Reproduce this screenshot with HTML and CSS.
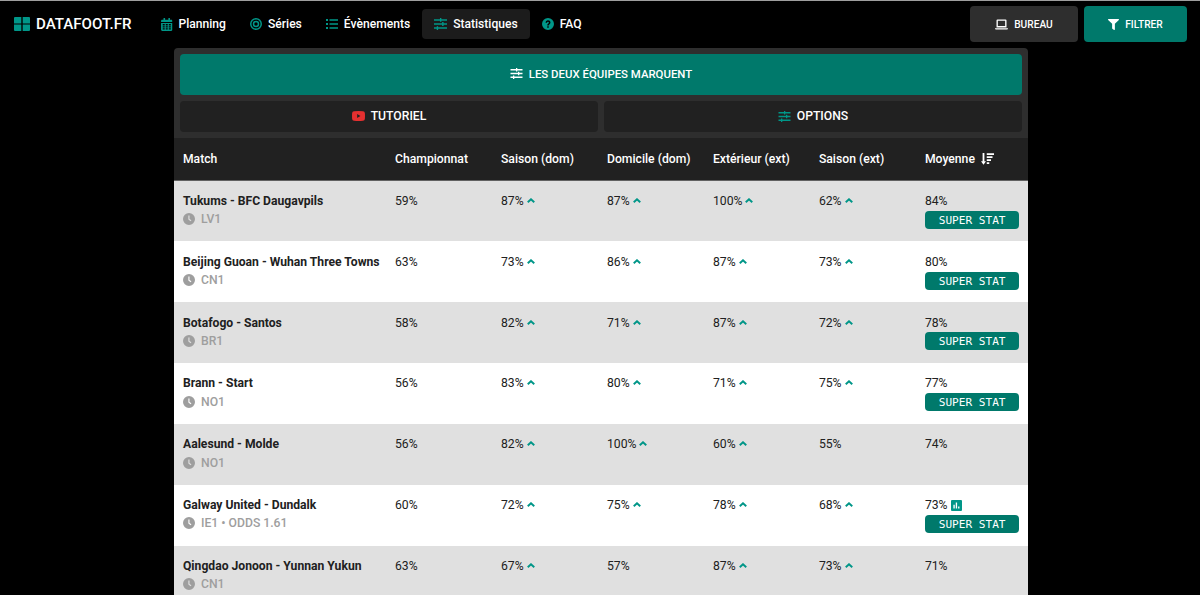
FILE: index.html
```html
<!DOCTYPE html>
<html lang="fr">
<head>
  <meta charset="UTF-8" />
  <meta name="viewport" content="width=device-width, initial-scale=1" />
  <title>DATAFOOT.FR - Statistiques</title>
  <link rel="stylesheet" href="styles.css">
</head>
<body>

  <svg class="sprite" xmlns="http://www.w3.org/2000/svg">
    <symbol id="i-grid" viewBox="0 0 16 14"><path d="M1 0h6.300v6.500H0V1a1 1 0 0 1 1-1zM8.700 0H15a1 1 0 0 1 1 1v5.500H8.700zM0 7.600h7.300V14H1a1 1 0 0 1-1-1zM8.700 7.600H16V13a1 1 0 0 1-1 1H8.700z"/></symbol>
    <symbol id="i-calendar" viewBox="0 0 448 512"><path fill-rule="evenodd" d="M0 464c0 26.500 21.500 48 48 48h352c26.500 0 48-21.500 48-48V192H0v272zM64 240h80v56H64zm120 0h80v56h-80zm120 0h80v56h-80zM64 326h80v46H64zm120 0h80v46h-80zm120 0h80v46h-80zM64 402h80v50H64zm120 0h80v50h-80zm120 0h80v50h-80zM400 64h-48V16c0-9-7-16-16-16h-32c-9 0-16 7-16 16v48H160V16c0-9-7-16-16-16h-32c-9 0-16 7-16 16v48H48C21.500 64 0 85.500 0 112v48h448v-48c0-26.500-21.500-48-48-48z"/></symbol>
    <symbol id="i-target" viewBox="0 0 24 24"><g fill="none" stroke="currentColor"><circle cx="12" cy="12" r="10.500" stroke-width="3"/><circle cx="12" cy="12" r="5" stroke-width="3"/></g></symbol>
    <symbol id="i-list" viewBox="0 0 24 22"><path d="M0 1h4v4H0zM7 1.700h17v2.600H7zM0 9h4v4H0zM7 9.700h17v2.600H7zM0 17h4v4H0zM7 17.700h17v2.600H7z"/></symbol>
    <symbol id="i-sliders" viewBox="0 0 24 22"><path d="M0 2.200h11V0h2.600v2.200H24v2.600H13.600V7H11V4.800H0zM0 9.700h15V7.500h2.600v2.200H24v2.600h-6.400v2.200H15v-2.200H0zM0 17.200h5V15h2.600v2.200H24v2.600H7.600V22H5v-2.200H0z"/></symbol>
    <symbol id="i-question" viewBox="0 0 24 24"><path fill-rule="evenodd" d="M12 0a12 12 0 1 0 0 24 12 12 0 0 0 0-24zm-1.500 16.500h3v3h-3zm3-1.700h-3c0-3.800 3.300-3.600 3.300-5.800 0-1-.8-1.700-1.800-1.700s-1.900.7-1.900 2H7.200c0-3 2.200-4.800 4.800-4.800s4.900 1.700 4.900 4.500c0 3.200-3.400 3.600-3.400 5.800z"/></symbol>
    <symbol id="i-laptop" viewBox="0 0 26 22"><path fill-rule="evenodd" d="M5 1h16a2 2 0 0 1 2 2v14H3V3a2 2 0 0 1 2-2zm.7 2.700v10.500h14.600V3.700zM0 18.300h26v.7a2 2 0 0 1-2 2H2a2 2 0 0 1-2-2z"/></symbol>
    <symbol id="i-filter" viewBox="0 0 512 512"><path d="M488 0H24C2.700 0-8 25.900 7 41l185 185v206c0 7.800 3.800 15.200 10.200 19.700l80 56c15.800 11 37.800-.2 37.800-19.700V226L505 41c15-15.100 4.300-41-17-41z"/></symbol>
    <symbol id="i-youtube" viewBox="0 0 26 20"><path fill-rule="evenodd" d="M4 .5Q13-.3 22 .5q3.500.3 3.700 3.500.6 6 0 12-.2 3.200-3.700 3.500-9 .8-18 0Q.5 19.200.3 16q-.6-6 0-12Q.5.800 4 .5zM10.300 6v8l6.500-4z"/></symbol>
    <symbol id="i-sort" viewBox="0 0 26 24"><path d="M3.200 0h3.600v16.500H10L5 23.500 0 16.500h3.200zM11.500 .5H26v3.600H11.500zM11.500 6.500h11.500v3.600H11.500zM11.500 12.500h8.500v3.600h-8.500zM11.500 18.500h5v3.600h-5z"/></symbol>
    <symbol id="i-clock" viewBox="0 0 24 24"><path fill-rule="evenodd" d="M12 0a12 12 0 1 0 0 24 12 12 0 0 0 0-24zm-1.300 4.800H13v7l3.800 2.800-1.500 2-4.600-3.400z"/></symbol>
    <symbol id="i-up" viewBox="0 0 16 10"><path d="M1.500 8.300 8 2.600l6.500 5.700" fill="none" stroke="currentColor" stroke-width="4"/></symbol>
    <symbol id="i-chart" viewBox="0 0 22 22"><path fill-rule="evenodd" d="M2 0h18a2 2 0 0 1 2 2v18a2 2 0 0 1-2 2H2a2 2 0 0 1-2-2V2a2 2 0 0 1 2-2zm2.800 9.500V17h2.700V9.500zM9.500 5v12h2.700V5zm4.700 8v4h2.700v-4z"/></symbol>
  </svg>

  <header class="topbar">
    <a class="brand"><svg><use href="#i-grid"/></svg>DATAFOOT.FR</a>
    <nav class="nav">
      <a class="planning"><svg><use href="#i-calendar"/></svg>Planning</a>
      <a><svg><use href="#i-target"/></svg>Séries</a>
      <a><svg><use href="#i-list"/></svg>Évènements</a>
      <a class="active"><svg><use href="#i-sliders"/></svg>Statistiques</a>
      <a><svg><use href="#i-question"/></svg>FAQ</a>
    </nav>
    <div class="actions">
      <button class="desktop"><svg><use href="#i-laptop"/></svg>BUREAU</button>
      <button class="filter"><svg><use href="#i-filter"/></svg>FILTRER</button>
    </div>
  </header>

  <main class="panel">
    <div class="controls">
      <button class="title"><svg><use href="#i-sliders"/></svg>LES DEUX ÉQUIPES MARQUENT</button>
      <button class="tuto"><svg><use href="#i-youtube"/></svg>TUTORIEL</button>
      <button class="options"><svg><use href="#i-sliders"/></svg>OPTIONS</button>
    </div>

    <div class="row head">
      <div class="match">Match</div>
      <div>Championnat</div>
      <div>Saison (dom)</div>
      <div>Domicile (dom)</div>
      <div>Extérieur (ext)</div>
      <div>Saison (ext)</div>
      <div>Moyenne<svg><use href="#i-sort"/></svg></div>
    </div>

    <div class="row">
      <div class="match">Tukums - BFC Daugavpils<small><svg><use href="#i-clock"/></svg>LV1</small></div>
      <div>59%</div>
      <div>87%<svg class="up"><use href="#i-up"/></svg></div>
      <div>87%<svg class="up"><use href="#i-up"/></svg></div>
      <div>100%<svg class="up"><use href="#i-up"/></svg></div>
      <div>62%<svg class="up"><use href="#i-up"/></svg></div>
      <div>84%<span class="badge">SUPER STAT</span></div>
    </div>

    <div class="row">
      <div class="match">Beijing Guoan - Wuhan Three Towns<small><svg><use href="#i-clock"/></svg>CN1</small></div>
      <div>63%</div>
      <div>73%<svg class="up"><use href="#i-up"/></svg></div>
      <div>86%<svg class="up"><use href="#i-up"/></svg></div>
      <div>87%<svg class="up"><use href="#i-up"/></svg></div>
      <div>73%<svg class="up"><use href="#i-up"/></svg></div>
      <div>80%<span class="badge">SUPER STAT</span></div>
    </div>

    <div class="row">
      <div class="match">Botafogo - Santos<small><svg><use href="#i-clock"/></svg>BR1</small></div>
      <div>58%</div>
      <div>82%<svg class="up"><use href="#i-up"/></svg></div>
      <div>71%<svg class="up"><use href="#i-up"/></svg></div>
      <div>87%<svg class="up"><use href="#i-up"/></svg></div>
      <div>72%<svg class="up"><use href="#i-up"/></svg></div>
      <div>78%<span class="badge">SUPER STAT</span></div>
    </div>

    <div class="row">
      <div class="match">Brann - Start<small><svg><use href="#i-clock"/></svg>NO1</small></div>
      <div>56%</div>
      <div>83%<svg class="up"><use href="#i-up"/></svg></div>
      <div>80%<svg class="up"><use href="#i-up"/></svg></div>
      <div>71%<svg class="up"><use href="#i-up"/></svg></div>
      <div>75%<svg class="up"><use href="#i-up"/></svg></div>
      <div>77%<span class="badge">SUPER STAT</span></div>
    </div>

    <div class="row">
      <div class="match">Aalesund - Molde<small><svg><use href="#i-clock"/></svg>NO1</small></div>
      <div>56%</div>
      <div>82%<svg class="up"><use href="#i-up"/></svg></div>
      <div>100%<svg class="up"><use href="#i-up"/></svg></div>
      <div>60%<svg class="up"><use href="#i-up"/></svg></div>
      <div>55%</div>
      <div>74%</div>
    </div>

    <div class="row">
      <div class="match">Galway United - Dundalk<small><svg><use href="#i-clock"/></svg>IE1 • ODDS 1.61</small></div>
      <div>60%</div>
      <div>72%<svg class="up"><use href="#i-up"/></svg></div>
      <div>75%<svg class="up"><use href="#i-up"/></svg></div>
      <div>78%<svg class="up"><use href="#i-up"/></svg></div>
      <div>68%<svg class="up"><use href="#i-up"/></svg></div>
      <div>73%<svg class="chart"><use href="#i-chart"/></svg><span class="badge">SUPER STAT</span></div>
    </div>

    <div class="row">
      <div class="match">Qingdao Jonoon - Yunnan Yukun<small><svg><use href="#i-clock"/></svg>CN1</small></div>
      <div>63%</div>
      <div>67%<svg class="up"><use href="#i-up"/></svg></div>
      <div>57%</div>
      <div>87%<svg class="up"><use href="#i-up"/></svg></div>
      <div>73%<svg class="up"><use href="#i-up"/></svg></div>
      <div>71%</div>
    </div>
  </main>

</body>
</html>
```
FILE: styles.css
```css
* {
  box-sizing: border-box;
}

body {
  margin: 0;
  height: 595px;
  overflow: hidden;
  background: #000;
  border-top: 1px solid #9e9e9e;
  font-family: Roboto, "Liberation Sans", sans-serif;
  font-size: 12.2px;
  color: #fff;
}

svg {
  fill: currentColor;
  flex: none;
}

.sprite {
  display: none;
}

button {
  display: flex;
  align-items: center;
  justify-content: center;
  border: none;
  border-radius: 4px;
  padding: 0;
  font: inherit;
  font-weight: 500;
  color: #fff;
  cursor: pointer;
}

.topbar {
  display: flex;
  align-items: center;
  height: 46px;
  padding: 0 13px 0 14px;
}

.brand {
  display: flex;
  align-items: center;
  gap: 6px;
  width: 135px;
  font-size: 15.1px;
  font-weight: 500;
}

.brand svg {
  width: 16px;
  height: 14px;
  color: #009688;
}

.nav {
  display: flex;
}

.nav a {
  display: flex;
  align-items: center;
  gap: 6px;
  height: 30px;
  padding: 0 12px;
  border-radius: 4px;
  font-size: 12.1px;
  font-weight: 500;
}

.nav svg {
  width: 12px;
  height: 12px;
  color: #009688;
}

.nav .planning svg {
  width: 11.5px;
  height: 13px;
}

.nav .active {
  background: #1c1c1c;
}

.nav .active svg {
  width: 13px;
}

.actions {
  display: flex;
  gap: 6px;
  margin-left: auto;
}

.actions button {
  height: 36px;
  gap: 6px;
  font-size: 10.2px;
}

.desktop {
  width: 108px;
  background: #2e2e2e;
}

.desktop svg {
  width: 13px;
  height: 11px;
}

.filter {
  width: 103px;
  background: #00796b;
}

.filter svg {
  width: 11px;
  height: 11px;
}

.panel {
  width: 854px;
  margin: 1px 0 0 174px;
  background: #2e2e2e;
  border-radius: 4px 4px 0 0;
}

.controls {
  display: grid;
  grid-template-columns: 1fr 1fr;
  gap: 6px;
  padding: 6px;
}

.controls button {
  height: 31px;
  gap: 6px;
  padding-bottom: 1px;
  background: #212121;
}

.controls .title {
  grid-column: span 2;
  height: 41px;
  padding-bottom: 2px;
  background: #00796b;
  font-size: 11.4px;
}

.controls svg {
  width: 13px;
  height: 11px;
}

.controls .tuto svg {
  height: 10px;
  color: #e53030;
}

.options svg {
  color: #009688;
}

.row {
  display: grid;
  grid-template-columns: repeat(8, 1fr);
  column-gap: 11.6px;
  height: 60.83px;
  padding: 11.4px 8.700px 0 9px;
  background: #fff;
  color: #212121;
  line-height: 18.2px;
}

.row:nth-child(odd) {
  background: #e0e0e0;
}

.row.head {
  height: 42.6px;
  padding-top: 12px;
  background: #212121;
  border-bottom: 1px solid #616161;
  color: #fff;
  font-weight: 500;
}

.head svg {
  width: 13px;
  height: 12px;
  margin-left: 6px;
  vertical-align: -2px;
}

.match {
  grid-column: span 2;
  font-size: 12.150px;
  font-weight: 700;
  white-space: nowrap;
}

.head .match {
  font-weight: 500;
}

.match small {
  display: flex;
  align-items: center;
  gap: 6px;
  font-size: 12.2px;
  font-weight: 500;
  color: #9e9e9e;
}

.match small svg {
  width: 12px;
  height: 12px;
}

.up {
  width: 8px;
  height: 5px;
  margin-left: 3px;
  vertical-align: 2px;
  color: #009688;
}

.chart {
  width: 11px;
  height: 11px;
  margin-left: 3px;
  vertical-align: -2px;
  color: #009688;
}

.badge {
  display: block;
  height: 18px;
  margin-top: .6px;
  border-radius: 4px;
  background: #00796b;
  color: #fff;
  font-family: "DejaVu Sans Mono", monospace;
  font-size: 11.1px;
  line-height: 19px;
  text-align: center;
}
```
